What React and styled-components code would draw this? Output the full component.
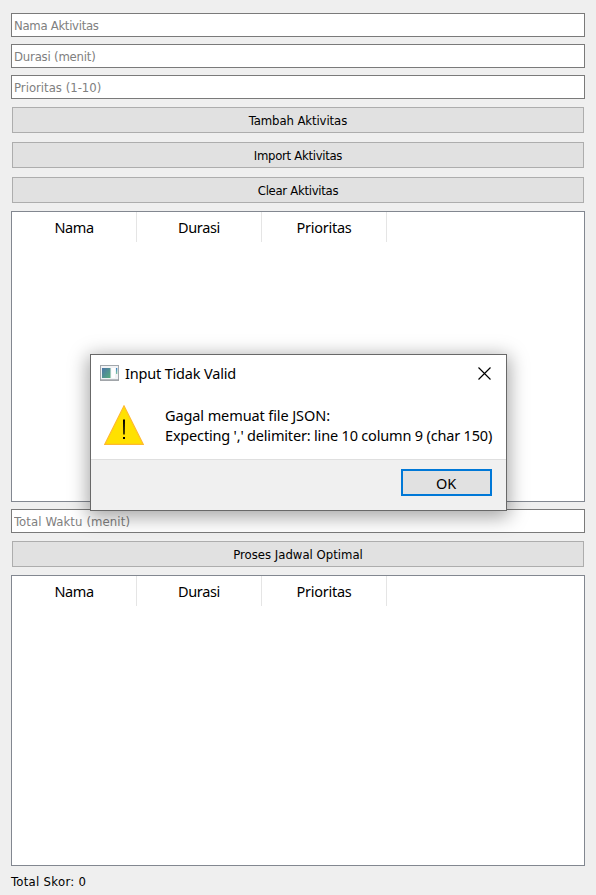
import React from "react";
import styled, { createGlobalStyle } from "styled-components";

const GlobalStyle = createGlobalStyle`
  * { box-sizing: border-box; }
  body {
    margin: 0;
    background: #efefef;
    overflow: hidden;
  }
`;

const uiFont = `"Noto Sans", "Open Sans", sans-serif`;

const Window = styled.main`
  position: relative;
  display: flex;
  flex-direction: column;
  width: 596px;
  height: 895px;
  padding: 13px 11px 0;
  background: #efefef;
  color: #000;
  font: 13px/16px "DejaVu Sans Condensed", "DejaVu Sans", sans-serif;
  font-stretch: condensed;
`;

const Field = styled.input`
  flex: none;
  width: 574px;
  height: 24px;
  margin: 0 0 ${(p) => p.$gap}px;
  padding: 0 2px;
  border: 1px solid #7a7a7a;
  border-radius: 0;
  outline: none;
  background: #fff;
  font: inherit;
  font-stretch: condensed;
  letter-spacing: ${(p) => p.$track || 0}px;
  &::placeholder { color: #808080; opacity: 1; }
`;

const PushButton = styled.button`
  flex: none;
  height: 26px;
  margin: 0 1px ${(p) => p.$gap}px;
  padding: 1px 0 0;
  border: 1px solid #adadad;
  border-radius: 0;
  background: #e1e1e1;
  color: #000;
  font: inherit;
  font-stretch: condensed;
  letter-spacing: ${(p) => p.$track || 0}px;
`;

const Table = styled.section`
  flex: none;
  width: 574px;
  height: 291px;
  margin-bottom: ${(p) => p.$gap}px;
  border: 1px solid #828790;
  background: #fff;
`;

const HeaderRow = styled.div`
  display: flex;
  height: 30px;
`;

const HeaderCell = styled.div`
  width: 125px;
  height: 30px;
  border-right: 1px solid #e5e5e5;
  font: 14.5px/31px ${uiFont};
  letter-spacing: ${(p) => p.$track || 0}px;
  text-align: center;
`;

const Score = styled.div`
  letter-spacing: 0.3px;
  white-space: nowrap;
`;

const Dialog = styled.div`
  position: absolute;
  left: 90px;
  top: 354px;
  display: flex;
  flex-direction: column;
  width: 417px;
  height: 157px;
  border: 1px solid #686868;
  background: #fff;
  box-shadow: 0 4px 18px 2px rgba(0, 0, 0, 0.36);
  font: 14.5px/20px ${uiFont};
  white-space: nowrap;
`;

const TitleBar = styled.header`
  display: flex;
  align-items: center;
  height: 36px;
  padding: 0 15px 0 9px;
`;

const Title = styled.span`
  flex: 1;
  margin-left: 6px;
  letter-spacing: ${(p) => p.$track}px;
`;

const CloseButton = styled.button`
  display: flex;
  padding: 0;
  border: 0;
  background: none;
`;

const Content = styled.div`
  display: flex;
  height: 68px;
  padding: 14px 0 0 13px;
`;

const Message = styled.div`
  margin-left: 21px;
`;

const Line = styled.div`
  letter-spacing: ${(p) => p.$track}px;
`;

const Footer = styled.footer`
  display: flex;
  justify-content: flex-end;
  height: 51px;
  padding: 9px 14px 0 0;
  border-top: 1px solid #dfdfdf;
  background: #f0f0f0;
`;

const OkButton = styled.button`
  width: 91px;
  height: 27px;
  padding: 0 1px 0 0;
  border: 2px solid #0078d7;
  border-radius: 0;
  background: #e1e1e1;
  color: #000;
  font: 14.5px/24px ${uiFont};
  letter-spacing: ${(p) => p.$track}px;
`;

const AppIcon = () => (
  <svg width="19" height="16" viewBox="0 0 19 16">
    <defs>
      <linearGradient id="pane" x1="0" y1="0" x2="1" y2="1">
        <stop offset="0" stopColor="#4b74a8" />
        <stop offset="1" stopColor="#56ad7c" />
      </linearGradient>
      <linearGradient id="strip" x1="0" y1="0" x2="0" y2="1">
        <stop offset="0" stopColor="#3a7fc4" />
        <stop offset="1" stopColor="#83c9a0" />
      </linearGradient>
    </defs>
    <rect x="0.5" y="0.5" width="18" height="14.5" fill="#f2f3f5" stroke="#a2a7ac" />
    <path d="M0 15.2H19" stroke="#8c9196" />
    <rect x="2" y="3" width="8.5" height="10" fill="url(#pane)" />
    <rect x="11.5" y="3" width="3.5" height="10" fill="#fff" />
    <rect x="16" y="3" width="1.3" height="6" fill="url(#strip)" />
  </svg>
);

const CloseIcon = () => (
  <svg width="13" height="13" viewBox="0 0 13 13">
    <path d="M0.5 0.5L12.5 12.5M12.5 0.5L0.5 12.5" stroke="#000" strokeWidth="1.15" />
  </svg>
);

const WarningIcon = () => (
  <svg width="40" height="40" viewBox="0 0 40 40">
    <path d="M20 0.8L39.3 39.4H0.7Z" fill="#ffe100" stroke="#ffb92e" strokeWidth="1.1" />
    <path d="M19 14.5H21L20.7 29.5H19.3Z" fill="#000" />
    <rect x="19" y="32" width="2" height="2" fill="#000" />
  </svg>
);

const ActivityTable = ({ gap }) => (
  <Table $gap={gap}>
    <HeaderRow>
      <HeaderCell $track={-0.4}>Nama</HeaderCell>
      <HeaderCell $track={-0.35}>Durasi</HeaderCell>
      <HeaderCell $track={-0.25}>Prioritas</HeaderCell>
    </HeaderRow>
  </Table>
);

export default function App() {
  return (
    <>
      <GlobalStyle />
      <Window>
        <Field placeholder="Nama Aktivitas" $gap={7} $track={-0.3} />
        <Field placeholder="Durasi (menit)" $gap={7} $track={-0.2} />
        <Field placeholder="Prioritas (1-10)" $gap={8} />
        <PushButton $gap={9} $track={-0.1}>Tambah Aktivitas</PushButton>
        <PushButton $gap={9} $track={-0.3}>Import Aktivitas</PushButton>
        <PushButton $gap={8} $track={-0.3}>Clear Aktivitas</PushButton>
        <ActivityTable gap={7} />
        <Field placeholder="Total Waktu (menit)" $gap={8} $track={0.1} />
        <PushButton $gap={8}>Proses Jadwal Optimal</PushButton>
        <ActivityTable gap={8} />
        <Score>Total Skor: 0</Score>

        <Dialog role="alertdialog" aria-label="Input Tidak Valid">
          <TitleBar>
            <AppIcon />
            <Title $track={-0.18}>Input Tidak Valid</Title>
            <CloseButton aria-label="Close"><CloseIcon /></CloseButton>
          </TitleBar>
          <Content>
            <WarningIcon />
            <Message>
              <Line $track={-0.1}>Gagal memuat file JSON:</Line>
              <Line $track={-0.18}>Expecting ',' delimiter: line 10 column 9 (char 150)</Line>
            </Message>
          </Content>
          <Footer>
            <OkButton $track={-0.2}>OK</OkButton>
          </Footer>
        </Dialog>
      </Window>
    </>
  );
}
